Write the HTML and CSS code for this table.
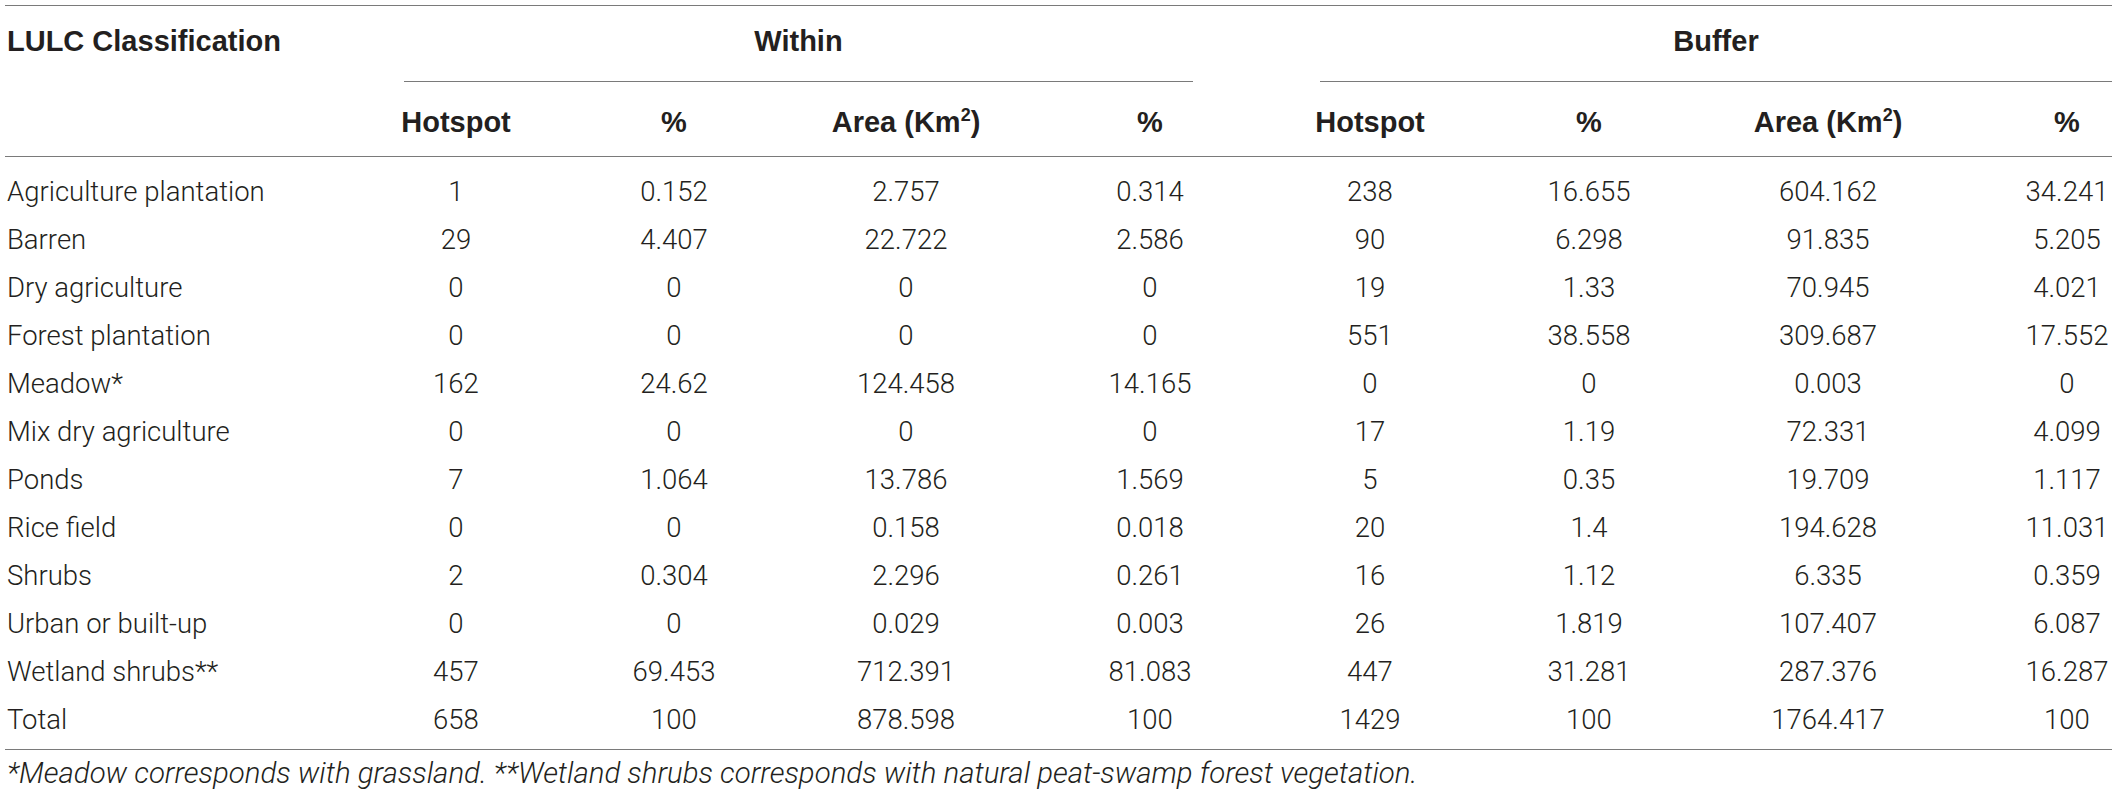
FILE: index.html
```html
<!DOCTYPE html>
<html>
<head>
<meta charset="utf-8">
<link rel="stylesheet" href="styles.css">
</head>
<body>
<div class="table">
  <div class="head">
    <div class="lab head-lab">LULC Classification</div>
    <div class="head-right">
      <div class="groups">
        <div class="group g-within">Within</div>
        <div class="group g-buffer">Buffer</div>
      </div>
      <div class="row colheads">
        <div class="cell c2">Hotspot</div>
        <div class="cell c3">%</div>
        <div class="cell c4">Area (Km<sup>2</sup>)</div>
        <div class="cell c5">%</div>
        <div class="cell c6">Hotspot</div>
        <div class="cell c7">%</div>
        <div class="cell c8">Area (Km<sup>2</sup>)</div>
        <div class="cell c9">%</div>
      </div>
    </div>
  </div>
  <div class="body">
    <div class="row data"><div class="lab">Agriculture plantation</div><div class="cell c2">1</div><div class="cell c3">0.152</div><div class="cell c4">2.757</div><div class="cell c5">0.314</div><div class="cell c6">238</div><div class="cell c7">16.655</div><div class="cell c8">604.162</div><div class="cell c9">34.241</div></div>
    <div class="row data"><div class="lab">Barren</div><div class="cell c2">29</div><div class="cell c3">4.407</div><div class="cell c4">22.722</div><div class="cell c5">2.586</div><div class="cell c6">90</div><div class="cell c7">6.298</div><div class="cell c8">91.835</div><div class="cell c9">5.205</div></div>
    <div class="row data"><div class="lab">Dry agriculture</div><div class="cell c2">0</div><div class="cell c3">0</div><div class="cell c4">0</div><div class="cell c5">0</div><div class="cell c6">19</div><div class="cell c7">1.33</div><div class="cell c8">70.945</div><div class="cell c9">4.021</div></div>
    <div class="row data"><div class="lab">Forest plantation</div><div class="cell c2">0</div><div class="cell c3">0</div><div class="cell c4">0</div><div class="cell c5">0</div><div class="cell c6">551</div><div class="cell c7">38.558</div><div class="cell c8">309.687</div><div class="cell c9">17.552</div></div>
    <div class="row data"><div class="lab">Meadow*</div><div class="cell c2">162</div><div class="cell c3">24.62</div><div class="cell c4">124.458</div><div class="cell c5">14.165</div><div class="cell c6">0</div><div class="cell c7">0</div><div class="cell c8">0.003</div><div class="cell c9">0</div></div>
    <div class="row data"><div class="lab">Mix dry agriculture</div><div class="cell c2">0</div><div class="cell c3">0</div><div class="cell c4">0</div><div class="cell c5">0</div><div class="cell c6">17</div><div class="cell c7">1.19</div><div class="cell c8">72.331</div><div class="cell c9">4.099</div></div>
    <div class="row data"><div class="lab">Ponds</div><div class="cell c2">7</div><div class="cell c3">1.064</div><div class="cell c4">13.786</div><div class="cell c5">1.569</div><div class="cell c6">5</div><div class="cell c7">0.35</div><div class="cell c8">19.709</div><div class="cell c9">1.117</div></div>
    <div class="row data"><div class="lab">Rice field</div><div class="cell c2">0</div><div class="cell c3">0</div><div class="cell c4">0.158</div><div class="cell c5">0.018</div><div class="cell c6">20</div><div class="cell c7">1.4</div><div class="cell c8">194.628</div><div class="cell c9">11.031</div></div>
    <div class="row data"><div class="lab">Shrubs</div><div class="cell c2">2</div><div class="cell c3">0.304</div><div class="cell c4">2.296</div><div class="cell c5">0.261</div><div class="cell c6">16</div><div class="cell c7">1.12</div><div class="cell c8">6.335</div><div class="cell c9">0.359</div></div>
    <div class="row data"><div class="lab">Urban or built-up</div><div class="cell c2">0</div><div class="cell c3">0</div><div class="cell c4">0.029</div><div class="cell c5">0.003</div><div class="cell c6">26</div><div class="cell c7">1.819</div><div class="cell c8">107.407</div><div class="cell c9">6.087</div></div>
    <div class="row data"><div class="lab">Wetland shrubs**</div><div class="cell c2">457</div><div class="cell c3">69.453</div><div class="cell c4">712.391</div><div class="cell c5">81.083</div><div class="cell c6">447</div><div class="cell c7">31.281</div><div class="cell c8">287.376</div><div class="cell c9">16.287</div></div>
    <div class="row data"><div class="lab">Total</div><div class="cell c2">658</div><div class="cell c3">100</div><div class="cell c4">878.598</div><div class="cell c5">100</div><div class="cell c6">1429</div><div class="cell c7">100</div><div class="cell c8">1764.417</div><div class="cell c9">100</div></div>
  </div>
  <p class="note">*Meadow corresponds with grassland. **Wetland shrubs corresponds with natural peat-swamp forest vegetation.</p>
</div>
</body>
</html>
```
FILE: styles.css
```css
html, body {
  margin: 0;
  padding: 0;
  background: #ffffff;
}

body {
  font-family: Roboto, "Liberation Sans", Arial, sans-serif;
  font-weight: 300;
  color: #231f20;
}

.table {
  width: 2107px;
  margin: 5px 0 0 5px;
  border-top: 1px solid #7a7a7a;
}

.head {
  display: flex;
  border-bottom: 1px solid #7a7a7a;
  font-family: "Liberation Sans", Arial, sans-serif;
  font-weight: bold;
  font-size: 29px;
  color: #231f20;
}

.head-lab {
  width: 349px;
  padding: 11px 0 0 2px;
  line-height: 48px;
}

.head-right {
  display: flex;
  flex-direction: column;
  width: 1756px;
}

.groups {
  display: flex;
  height: 76px;
}

.group {
  box-sizing: border-box;
  padding-top: 11px;
  line-height: 48px;
  text-align: center;
  border-bottom: 1px solid #7a7a7a;
}

.g-within {
  margin-left: 48px;
  width: 789px;
}

.g-buffer {
  margin-left: 127px;
  width: 792px;
}

.row {
  display: flex;
}

.colheads {
  margin-left: -351px;
  padding: 16px 0 10px 351px;
  line-height: 48px;
}

.cell {
  width: 200px;
  text-align: center;
  white-space: nowrap;
}

.c2 { margin-left: 0; }
.c3 { margin-left: 18px; }
.c4 { margin-left: 32px; }
.c5 { margin-left: 44px; }
.c6 { margin-left: 20px; }
.c7 { margin-left: 19px; }
.c8 { margin-left: 39px; }
.c9 { margin-left: 94px; width: 90px; }

sup {
  font-size: 0.62em;
  line-height: 0;
  vertical-align: 0.6em;
}

.body {
  padding: 11px 0 5px;
  border-bottom: 1px solid #7a7a7a;
  font-size: 27.5px;
}

.data {
  line-height: 48px;
}

.data .lab {
  width: 349px;
  padding-left: 2px;
  white-space: nowrap;
}

.note {
  margin: 0;
  padding: 5px 0 0 2px;
  font-size: 29.4px;
  font-style: italic;
  line-height: 36px;
  white-space: nowrap;
}
```
